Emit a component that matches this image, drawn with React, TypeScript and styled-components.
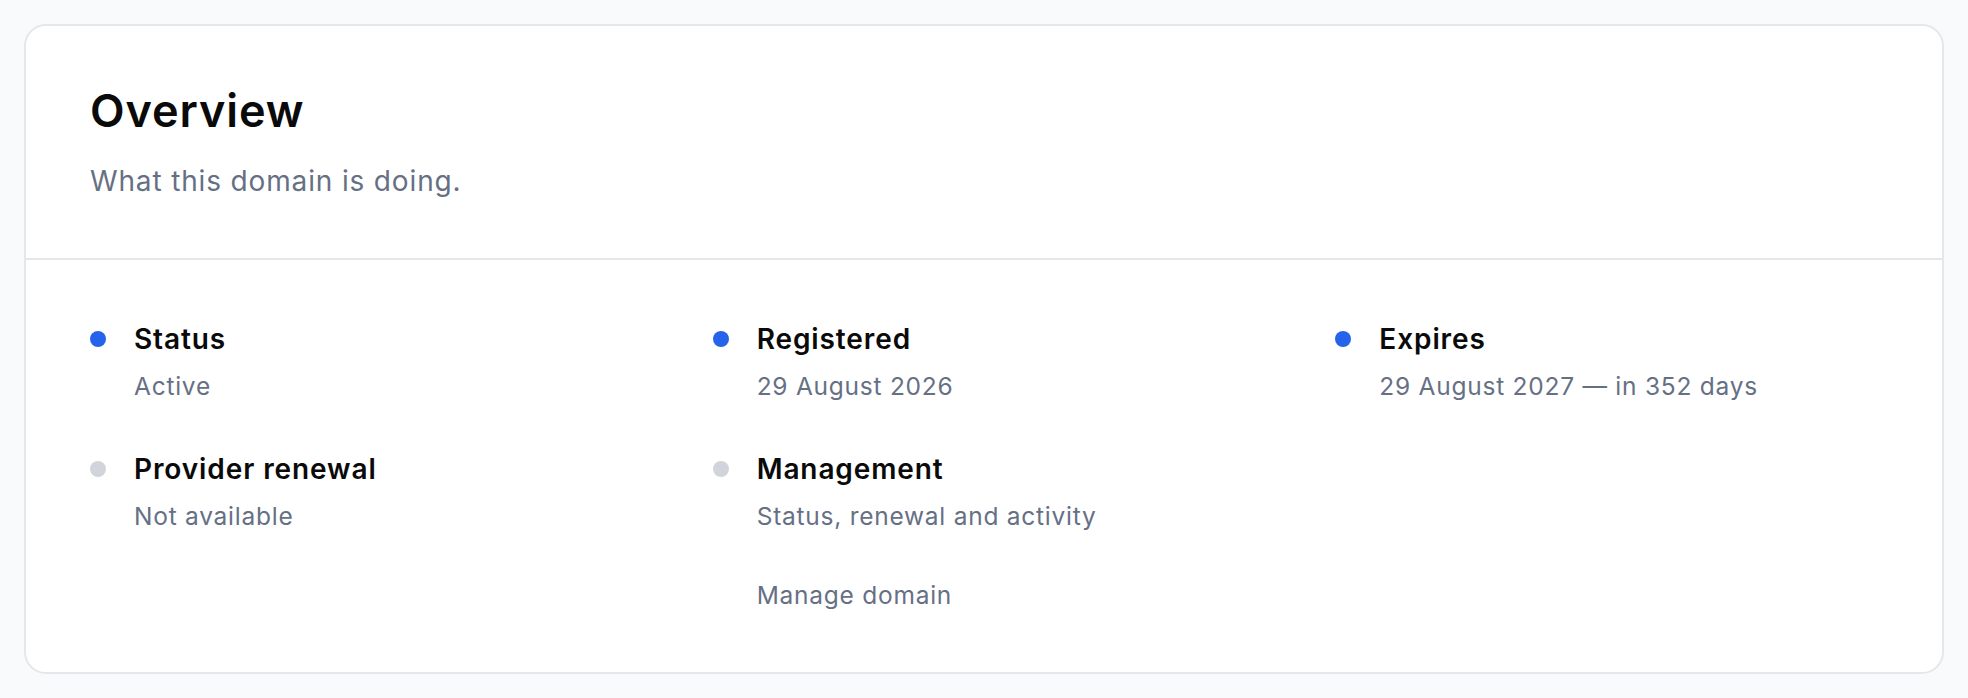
import styled, { createGlobalStyle } from "styled-components";

const GlobalStyle = createGlobalStyle`
    * {
        box-sizing: border-box;
    }
    body {
        margin: 0;
        background: #f9fafb;
        font-family: Inter, "Noto Sans", "Liberation Sans", sans-serif;
        -webkit-font-smoothing: antialiased;
    }
`

type Tone = "active" | "muted";

interface Fact {
    label: string;
    value: string;
    tone: Tone;
    link?: string;
}

const facts: Fact[] = [
    { label: "Status", value: "Active", tone: "active" },
    { label: "Registered", value: "29 August 2026", tone: "active" },
    { label: "Expires", value: "29 August 2027 — in 352 days", tone: "active" },
    { label: "Provider renewal", value: "Not available", tone: "muted" },
    { label: "Management", value: "Status, renewal and activity", tone: "muted", link: "Manage domain" },
];

const App = () => {
    return (
        <Page>
            <GlobalStyle />
            <Card>
                <Header>
                    <Title>Overview</Title>
                    <Subtitle>What this domain is doing.</Subtitle>
                </Header>
                <Body>
                    {facts.map((fact) => (
                        <Item key={fact.label}>
                            <Dot $tone={fact.tone} />
                            <Text>
                                <Label>{fact.label}</Label>
                                <Value>{fact.value}</Value>
                                {fact.link && <Action href="#">{fact.link}</Action>}
                            </Text>
                        </Item>
                    ))}
                </Body>
            </Card>
        </Page>
    )
}

const Page = styled.div`
    padding: 24px;
`
const Card = styled.section`
    background: #ffffff;
    border: 2px solid #e5e7eb;
    border-radius: 22px;
    overflow: hidden;
`
const Header = styled.div`
    padding: 58px 64px 54px;
    border-bottom: 2px solid #e5e7eb;
`
const Title = styled.h2`
    margin: 0;
    font-size: 45px;
    line-height: 54px;
    font-weight: 600;
    letter-spacing: 0.9px;
    color: #0a0a0a;
`
const Subtitle = styled.p`
    margin: 22px 0 0;
    font-size: 28px;
    line-height: 43.5px;
    letter-spacing: 0.85px;
    color: #667085;
`
const Body = styled.div`
    display: grid;
    grid-template-columns: repeat(3, 1fr);
    column-gap: 80px;
    row-gap: 43.5px;
    padding: 59px 64px 57.5px;
`
const Item = styled.div`
    display: flex;
    align-items: flex-start;
    gap: 28px;
`
const Dot = styled.span<{ $tone: Tone }>`
    flex: none;
    width: 16px;
    height: 16px;
    margin-top: 12px;
    border-radius: 50%;
    background: ${({ $tone }) => ($tone === "active" ? "#2563eb" : "#d1d5db")};
`
const Text = styled.div`
    display: flex;
    flex-direction: column;
`
const Label = styled.span`
    font-size: 28px;
    line-height: 40.5px;
    font-weight: 600;
    letter-spacing: 0.9px;
    color: #0a0a0a;
`
const Value = styled.span`
    margin-top: 8.5px;
    font-size: 24.5px;
    line-height: 37.5px;
    letter-spacing: 0.75px;
    color: #667085;
`
const Action = styled.a`
    margin-top: 41.5px;
    font-size: 24.5px;
    line-height: 37.5px;
    letter-spacing: 0.75px;
    color: #667085;
    text-decoration: none;
`

export default App;
